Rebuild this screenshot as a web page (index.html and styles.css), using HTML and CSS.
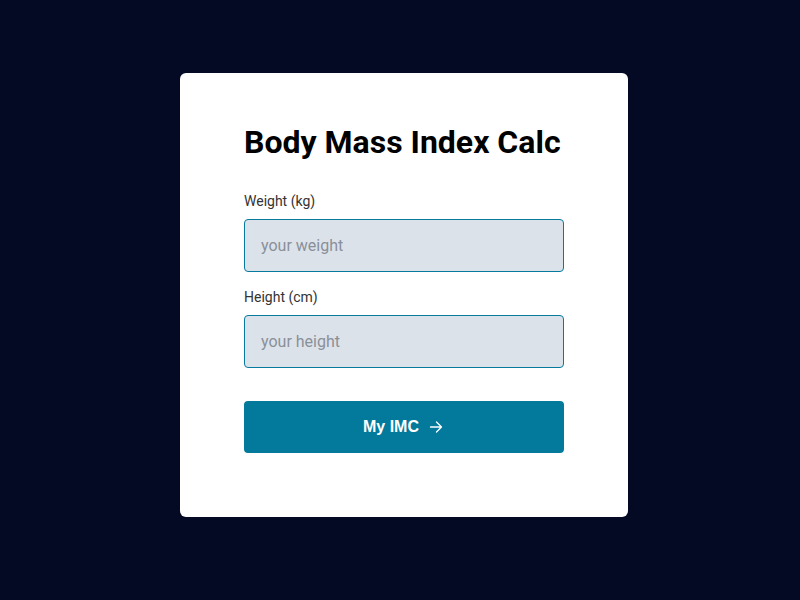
FILE: index.html
```html
<!DOCTYPE html>
<html>
<head>
<meta charset="utf-8">
<link rel="stylesheet" href="styles.css">
</head>
<body>
<main class="page">
  <form class="card">
    <h1 class="title">Body Mass Index Calc</h1>
    <label class="label" for="w">Weight (kg)</label>
    <input class="field" id="w" type="text" placeholder="your weight">
    <label class="label" for="h">Height (cm)</label>
    <input class="field" id="h" type="text" placeholder="your height">
    <button class="btn" type="button">My IMC <span class="arrow">
      <svg width="14" height="14" viewBox="0 0 14 14" fill="none" stroke="#fff" stroke-width="1.3" stroke-linecap="round" stroke-linejoin="round"><path d="M1.5 7h11M7.5 2l5 5-5 5"/></svg>
    </span></button>
  </form>
</main>
</body>
</html>
```
FILE: styles.css
```css
* { box-sizing: border-box; }
html, body { margin: 0; padding: 0; }
body { background: #050a24; font-family: Roboto, "Liberation Sans", sans-serif; }
.page { width: 800px; height: 600px; display: flex; justify-content: center; align-items: flex-start; padding-top: 73px; padding-left: 8px; }
.card { width: 448px; height: 444px; background: #fff; border-radius: 6px; padding: 50px 64px 64px; display: flex; flex-direction: column; }
.title { margin: 0 0 32px; font-size: 32px; font-weight: 700; color: #000; line-height: 38px; }
.label { font-size: 14px; color: #333; line-height: 16px; margin-bottom: 10px; }
.field { height: 53px; width: 320px; border: 1px solid #087a9e; border-radius: 4px; background: #dce2ea; padding: 0 16px; font-family: Roboto, "Liberation Sans", sans-serif; font-size: 16px; color: #333; margin-bottom: 17px; outline: none; }
.field::placeholder { color: #8a9099; }
.btn { margin-top: 16px; height: 52px; width: 320px; border: none; border-radius: 4px; background: #037a9c; color: #fff; font-family: "Liberation Sans", Arial, sans-serif; font-weight: 700; font-size: 16px; display: flex; align-items: center; justify-content: center; gap: 10px; padding-left: 4px; }
.arrow { display: flex; }
```
